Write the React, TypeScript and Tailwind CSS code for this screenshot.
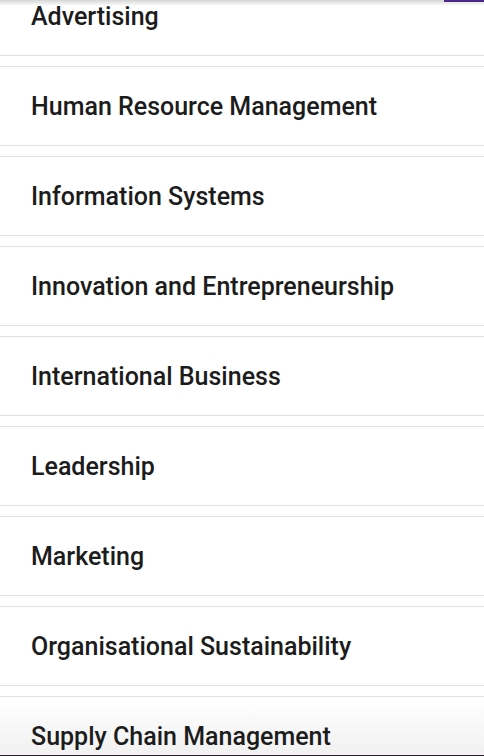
const subjects = [
  "Advertising",
  "Human Resource Management",
  "Information Systems",
  "Innovation and Entrepreneurship",
  "International Business",
  "Leadership",
  "Marketing",
  "Organisational Sustainability",
  "Supply Chain Management",
];

const App = () => {
  return (
    <div className="relative h-[756px] w-[484px] overflow-hidden bg-white font-['Roboto',sans-serif]">
      <div className="-mt-[24px] flex flex-col gap-[10px]">
        {subjects.map((name, i) => (
          <div
            key={name}
            className={
              i === subjects.length - 1
                ? "flex h-[80px] items-center border-y border-[#e0e0e0] bg-gradient-to-b from-white to-[#ececec] pl-[31px] pt-[2px]"
                : "flex h-[80px] items-center border-y border-[#e0e0e0] bg-white pl-[31px] pt-[2px]"
            }
          >
            <span className="text-[25px] font-medium text-[#1c1c1c]">{name}</span>
          </div>
        ))}
      </div>
      {/* header shadow + active tab marker */}
      <div className="absolute inset-x-0 top-0 h-[6px] bg-gradient-to-b from-[#d6d6d6] to-transparent" />
      <div className="absolute right-0 top-0 h-[2px] w-[40px] bg-[#4a2a86]" />
      <div className="absolute inset-x-0 bottom-0 h-[1px] bg-[#2a2233]" />
    </div>
  );
};

export default App;
